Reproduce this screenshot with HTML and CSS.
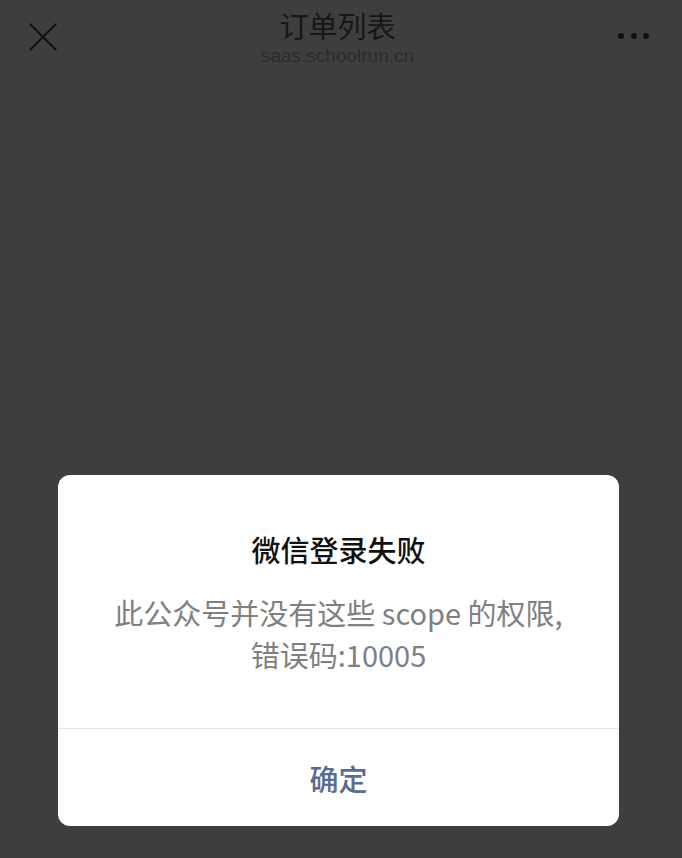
FILE: index.html
```html
<!DOCTYPE html>
<html lang="zh-CN">
<head>
<meta charset="utf-8">
<title>订单列表</title>
<link rel="stylesheet" href="styles.css">
</head>
<body>
<div class="screen">
  <header class="navbar">
    <button class="nav-btn close" aria-label="关闭">
      <svg width="28" height="28" viewBox="0 0 28 28"><path d="M1.5 1.5 L26.5 26.5 M26.5 1.5 L1.5 26.5" stroke="#111" stroke-width="2.2" fill="none" stroke-linecap="round"/></svg>
    </button>
    <div class="nav-title">
      <div class="title">订单列表</div>
      <div class="url">saas.schoolrun.cn</div>
    </div>
    <button class="nav-btn more" aria-label="更多">
      <span class="dot"></span><span class="dot"></span><span class="dot"></span>
    </button>
  </header>
  <main class="stage">
    <div class="dialog">
      <div class="dialog-body">
        <div class="dialog-title">微信登录失败</div>
        <div class="dialog-text">此公众号并没有这些 scope 的权限,<br>错误码:10005</div>
      </div>
      <div class="dialog-footer">
        <button class="dialog-btn">确定</button>
      </div>
    </div>
  </main>
</div>
</body>
</html>
```

FILE: styles.css
```css
html, body {
  margin: 0;
  padding: 0;
  background: #3e3e3e;
}
body {
  font-family: "Noto Sans CJK SC", "Noto Sans", sans-serif;
  height: 858px;
  overflow: hidden;
}
.screen {
  width: 676px;
  display: flex;
  flex-direction: column;
}
.navbar {
  height: 72px;
  display: flex;
  align-items: flex-start;
  justify-content: space-between;
  padding: 0 27px 0 29px;
}
.nav-btn {
  border: 0;
  background: none;
  padding: 0;
  margin: 0;
  display: flex;
  align-items: center;
}
.close {
  margin-top: 23px;
  width: 28px;
  height: 28px;
}
.close svg { display: block; }
.more {
  margin-top: 33px;
  gap: 6.5px;
}
.dot {
  width: 6px;
  height: 6px;
  border-radius: 50%;
  background: #111;
}
.nav-title {
  display: flex;
  flex-direction: column;
  align-items: center;
  padding-top: 8px;
}
.title {
  font-size: 29px;
  line-height: 34px;
  color: #161616;
}
.url {
  font-family: "Liberation Sans", Arial, sans-serif;
  font-size: 19px;
  line-height: 20px;
  margin-top: 4px;
  color: #2b2b2b;
}
.stage {
  padding-top: 403px;
  padding-left: 58px;
}
.dialog {
  width: 561px;
  background: #fff;
  border-radius: 12px;
  overflow: hidden;
}
.dialog-body {
  padding: 54px 30px 53px;
  text-align: center;
}
.dialog-title {
  font-size: 29px;
  line-height: 40px;
  font-weight: 500;
  color: #111;
}
.dialog-text {
  margin-top: 22px;
  font-size: 29px;
  line-height: 42px;
  color: #808080;
}
.dialog-footer {
  border-top: 1px solid #e6e6e6;
}
.dialog-btn {
  display: block;
  width: 100%;
  height: 97px;
  border: 0;
  background: none;
  font-family: "Noto Sans CJK SC", sans-serif;
  font-size: 29px;
  font-weight: 500;
  color: #576b95;
}
```
